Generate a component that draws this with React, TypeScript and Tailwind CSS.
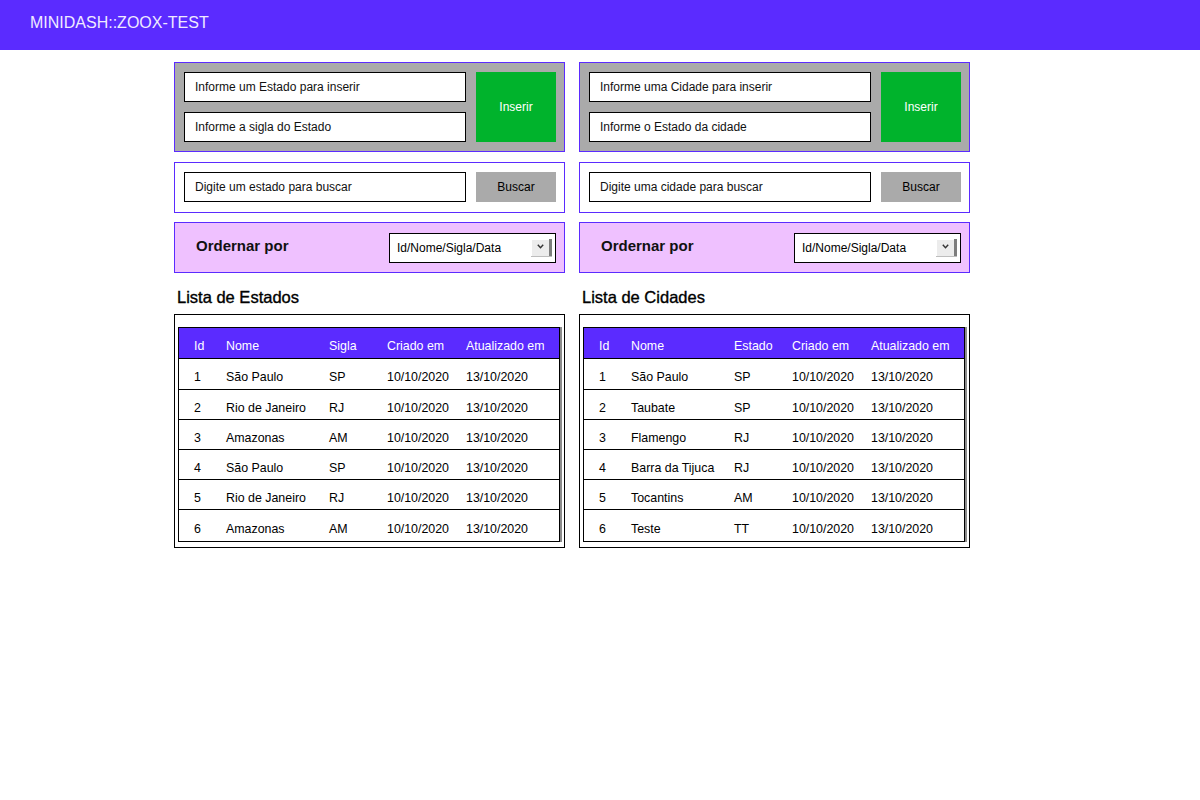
import React from 'react';

type Row = [number, string, string];

const estados: Row[] = [
    [1, 'São Paulo', 'SP'],
    [2, 'Rio de Janeiro', 'RJ'],
    [3, 'Amazonas', 'AM'],
    [4, 'São Paulo', 'SP'],
    [5, 'Rio de Janeiro', 'RJ'],
    [6, 'Amazonas', 'AM'],
];

const cidades: Row[] = [
    [1, 'São Paulo', 'SP'],
    [2, 'Taubate', 'SP'],
    [3, 'Flamengo', 'RJ'],
    [4, 'Barra da Tijuca', 'RJ'],
    [5, 'Tocantins', 'AM'],
    [6, 'Teste', 'TT'],
];

const TextBox: React.FC<{ placeholder: string }> = ({ placeholder }) => (
    <input
        readOnly
        placeholder={placeholder}
        className="h-[30px] w-[282px] border border-black bg-white px-[10px] text-[12px] text-black placeholder:text-[#111] outline-none"
    />
);

const SelectArrow = () => (
    <div className="flex h-[18px] w-[21px] border-b border-[#bdbdbd] bg-[#ececec]">
        <div className="flex flex-1 justify-center border-t border-l border-white pt-[4px]">
            <svg width="7" height="5" viewBox="0 0 7 5">
                <path d="M0.8 0.8 L3.5 3.8 L6.2 0.8" fill="none" stroke="#333" strokeWidth="1.4" />
            </svg>
        </div>
        <div className="w-[3px] bg-[#7d7d7d]" />
    </div>
);

interface ColumnProps {
    insert: [string, string];
    search: string;
    title: string;
    third: string;
    rows: Row[];
}

const Column: React.FC<ColumnProps> = ({ insert, search, title, third, rows }) => {
    const cols = 'grid grid-cols-[47px_103px_58px_79px_1fr] items-center pt-[6px] text-[12.4px] leading-[14px]';
    return (
        <div className="flex w-[391px] flex-col">
            {/* inserir */}
            <div className="flex gap-[10px] border border-[#5b2bff] bg-[#aaaaaa] py-[9px] pl-[9px] pr-[8px]">
                <div className="flex flex-col gap-[10px]">
                    <TextBox placeholder={insert[0]} />
                    <TextBox placeholder={insert[1]} />
                </div>
                <button className="w-[80px] bg-[#00b32c] text-[12px] text-white">Inserir</button>
            </div>

            {/* buscar */}
            <div className="mt-[10px] flex gap-[10px] border border-[#5b2bff] bg-white pt-[9px] pb-[10px] pl-[9px] pr-[8px]">
                <TextBox placeholder={search} />
                <button className="h-[30px] w-[80px] bg-[#aaaaaa] text-[12px] text-black">Buscar</button>
            </div>

            {/* ordenar */}
            <div className="mt-[9px] flex h-[51px] items-center justify-between border border-[#5b2bff] bg-[#efc1ff] pl-[21px] pr-[8px]">
                <span className="pb-[2px] text-[15px] font-bold text-[#111]">Ordernar por</span>
                <div className="flex h-[30px] w-[167px] items-center justify-between border border-black bg-white pl-[7px] pr-[3px] text-[12px] text-black">
                    <span>Id/Nome/Sigla/Data</span>
                    <SelectArrow />
                </div>
            </div>

            <h2 className="mt-[14px] h-[20px] pl-[3px] text-[16.5px] leading-[20px] text-black [-webkit-text-stroke:0.35px_black]">
                {title}
            </h2>

            <div className="mt-[7px] border border-black pt-[12px] pb-[5px] pl-[3px] pr-[4px]">
                <div className="border border-black bg-white shadow-[2px_0_0_#8c8c8c]">
                    <div className={`${cols} h-[31px] border-b border-black bg-[#5b2bff] text-white`}>
                        <span className="pl-[15px]">Id</span>
                        <span>Nome</span>
                        <span>{third}</span>
                        <span>Criado em</span>
                        <span>Atualizado em</span>
                    </div>
                    {rows.map(([id, nome, uf], i) => (
                        <div
                            key={id}
                            className={`${cols} text-black ${i === 0 ? 'h-[31px] border-b border-black' : i === rows.length - 1 ? 'h-[31px]' : 'h-[30px] border-b border-black'}`}
                        >
                            <span className="pl-[15px]">{id}</span>
                            <span>{nome}</span>
                            <span>{uf}</span>
                            <span>10/10/2020</span>
                            <span>13/10/2020</span>
                        </div>
                    ))}
                </div>
            </div>
        </div>
    );
};

const App: React.FC = () => {
    return (
        <div className="min-h-[800px] bg-white font-['Liberation_Sans',Arial,sans-serif]">
            <header className="flex h-[50px] items-center bg-[#5b2bff] pb-[4px] pl-[30px] text-[16px] text-[#efeaff]">
                MINIDASH::ZOOX-TEST
            </header>
            <main className="flex gap-[14px] pt-[12px] pl-[174px]">
                <Column
                    insert={['Informe um Estado para inserir', 'Informe a sigla do Estado']}
                    search="Digite um estado para buscar"
                    title="Lista de Estados"
                    third="Sigla"
                    rows={estados}
                />
                <Column
                    insert={['Informe uma Cidade para inserir', 'Informe o Estado da cidade']}
                    search="Digite uma cidade para buscar"
                    title="Lista de Cidades"
                    third="Estado"
                    rows={cidades}
                />
            </main>
        </div>
    );
};

export default App;
